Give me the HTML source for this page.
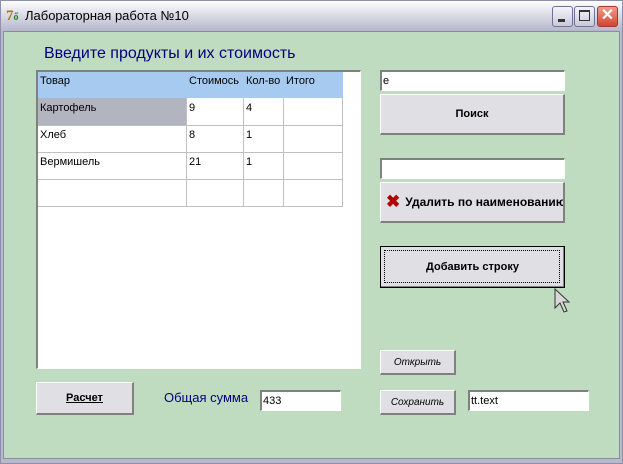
<!DOCTYPE html>
<html><head><meta charset="utf-8"><style>
*{margin:0;padding:0;box-sizing:border-box}
body{width:623px;height:464px;overflow:hidden;background:#fff;font-family:"Liberation Sans",sans-serif;font-size:11px;position:relative}
.abs{position:absolute}
.win{left:0;top:0;width:623px;height:464px;background:#b8b9cc;border:1px solid #8e8fa8}
.title{left:1px;top:1px;width:621px;height:30px;background:linear-gradient(#fdfdfe,#e4e4ec 35%,#b4b6cc);}
.client{left:3px;top:31px;width:617px;height:428px;background:#c0dcc0;border:1px solid #8a8ca0}
.tb{top:6px;width:21px;height:21px;border:1px solid #6e7190;border-radius:3px;background:linear-gradient(#f4f4fa,#c8c9da)}
.edit{background:#fff;border-top:2px solid #808080;border-left:2px solid #808080;border-right:1px solid #fff;border-bottom:1px solid #fff;font-size:11px;padding:3px 0 0 1px}
.btn{background:#e0dfe3;border-top:1px solid #fff;border-left:1px solid #fff;border-right:2px solid #808080;border-bottom:2px solid #808080;display:flex;align-items:center;justify-content:center;font-weight:bold;font-size:11px}
.cell{position:absolute;font-size:11px;padding:5px 2px}
</style></head><body>
<div class="abs win"></div>
<div class="abs title"></div>
<div class="abs" style="left:6px;top:8px;font:bold 15px 'Liberation Serif',serif;color:#a08000">7<span style="color:#2a7a2a;font-size:10px">ő</span></div>
<div class="abs" style="left:25px;top:8px;font-size:13px;color:#000">Лабораторная работа №10</div>
<div class="abs tb" style="left:552px"><div class="abs" style="left:5px;top:12px;width:7px;height:3px;background:#333"></div></div>
<div class="abs tb" style="left:574px"><div class="abs" style="left:4px;top:3px;width:11px;height:11px;border:1px solid #333;border-top-width:2px"></div></div>
<div class="abs tb" style="left:597px;background:linear-gradient(#f49a8a,#d2452e);border-color:#a03a2a;color:#fff;font:bold 16px sans-serif;text-align:center;line-height:18px">✕</div>
<div class="abs client"></div>
<div class="abs" style="left:44px;top:45px;font-size:16px;color:#000080">Введите продукты и их стоимость</div>
<div class="abs" style="left:36px;top:70px;width:325px;height:299px;background:#fff;border-top:2px solid #808080;border-left:2px solid #808080;border-right:1px solid #fff;border-bottom:1px solid #fff"></div>
<div class="abs" style="left:38px;top:72px;width:305px;height:26px;background:#a6caf0"></div>
<div class="abs" style="left:38px;top:98px;width:148px;height:27px;background:#b2b4c0"></div>
<svg class="abs" style="left:0;top:0" width="623" height="464">
<g stroke="#c0c0c0" stroke-width="1">
<line x1="38" y1="125.5" x2="343" y2="125.5"/><line x1="38" y1="152.5" x2="343" y2="152.5"/><line x1="38" y1="179.5" x2="343" y2="179.5"/><line x1="38" y1="206.5" x2="343" y2="206.5"/>
<line x1="186.5" y1="98" x2="186.5" y2="206"/><line x1="243.5" y1="98" x2="243.5" y2="206"/><line x1="283.5" y1="98" x2="283.5" y2="206"/><line x1="342.5" y1="98" x2="342.5" y2="206"/>
</g></svg>
<div class="cell" style="left:38px;top:70px">Товар</div><div class="cell" style="left:187px;top:70px">Стоимось</div><div class="cell" style="left:244px;top:70px">Кол-во</div><div class="cell" style="left:284px;top:70px">Итого</div>
<div class="cell" style="left:38px;top:97px">Картофель</div><div class="cell" style="left:187px;top:97px">9</div><div class="cell" style="left:244px;top:97px">4</div>
<div class="cell" style="left:38px;top:124px">Хлеб</div><div class="cell" style="left:187px;top:124px">8</div><div class="cell" style="left:244px;top:124px">1</div>
<div class="cell" style="left:38px;top:151px">Вермишель</div><div class="cell" style="left:187px;top:151px">21</div><div class="cell" style="left:244px;top:151px">1</div>
<div class="abs edit" style="left:380px;top:70px;width:185px;height:21px">е</div>
<div class="abs btn" style="left:380px;top:94px;width:185px;height:41px">Поиск</div>
<div class="abs edit" style="left:380px;top:158px;width:185px;height:21px"></div>
<div class="abs btn" style="left:380px;top:182px;width:185px;height:41px;justify-content:flex-start;padding-left:5px;white-space:nowrap;overflow:hidden;font-size:12px"><span style="color:#b00000;font-size:17px;margin-right:5px">✖</span>Удалить по наименованию</div>
<div class="abs btn" style="left:380px;top:246px;width:185px;height:42px;border:1px solid #000;box-shadow:inset -1px -1px #808080"><div class="abs" style="left:3px;top:3px;right:4px;bottom:4px;border:1px dotted #000"></div>Добавить строку</div>
<svg class="abs" style="left:554px;top:288px" width="20" height="30"><path d="M1 1 L1 20 L6 15 L10 24 L13 23 L9 14 L15 14 Z" fill="#d8d8d8" stroke="#333" stroke-width="1"/></svg>
<div class="abs btn" style="left:380px;top:350px;width:76px;height:25px;font-weight:normal;font-style:italic;font-size:10px">Открыть</div>
<div class="abs btn" style="left:380px;top:390px;width:76px;height:25px;font-weight:normal;font-style:italic;font-size:10px">Сохранить</div>
<div class="abs edit" style="left:468px;top:390px;width:121px;height:21px">tt.text</div>
<div class="abs btn" style="left:36px;top:382px;width:98px;height:33px;text-decoration:underline">Расчет</div>
<div class="abs" style="left:164px;top:390px;font-size:13px;color:#000080">Общая сумма</div>
<div class="abs edit" style="left:260px;top:390px;width:81px;height:21px">433</div>
</body></html>
